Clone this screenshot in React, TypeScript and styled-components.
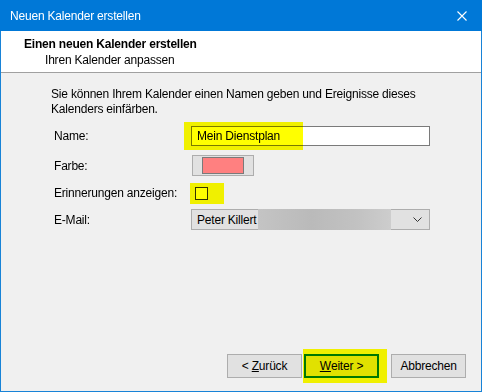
import styled, { createGlobalStyle } from 'styled-components';

const GlobalStyle = createGlobalStyle`
  html, body {
    margin: 0;
    padding: 0;
    background: #f0f0f0;
  }
  body {
    font-family: 'Liberation Sans', 'DejaVu Sans', sans-serif;
    font-size: 12px;
    letter-spacing: -0.2px;
    color: #000;
  }
`;

const Window = styled.div`
  width: 482px;
  height: 392px;
  box-sizing: border-box;
  display: flex;
  flex-direction: column;
  border: 1px solid #1883d7;
  border-top: 0;
  background: #f0f0f0;
`;

const TitleBar = styled.div`
  height: 31px;
  margin: 0 -1px;
  flex-shrink: 0;
  display: flex;
  align-items: center;
  justify-content: space-between;
  padding: 0 10px 0 10px;
  background: #0078d7;
  color: #fff;
  font-size: 12px;
`;

const CloseButton = styled.div`
  width: 10px;
  height: 10px;
  margin-right: 5px;
  display: flex;
`;

const Header = styled.div`
  height: 42px;
  flex-shrink: 0;
  box-sizing: border-box;
  padding: 5px 0 0 23px;
  background: #fff;
  border-bottom: 1px solid #a0a0a0;
  line-height: 16px;
`;

const HeaderTitle = styled.div`
  font-weight: bold;
`;

const HeaderSub = styled.div`
  padding-left: 21px;
`;

const Body = styled.div`
  flex: 1;
  display: flex;
  flex-direction: column;
  padding: 14px 15px 13px 50px;
`;

const Description = styled.p`
  margin: 0 0 9px;
  line-height: 15px;
`;

const Row = styled.div<{ $gap: number }>`
  display: grid;
  grid-template-columns: 137px 1fr;
  align-items: center;
  margin: ${(p) => p.$gap}px 0 0 3px;
`;

const Label = styled.span`
  line-height: 14px;
`;

const Control = styled.div`
  position: relative;
  display: flex;
  align-items: center;
`;

const Marker = styled.span<{ $l: number; $t: number; $w: number; $h: number }>`
  position: absolute;
  left: ${(p) => p.$l}px;
  top: ${(p) => p.$t}px;
  width: ${(p) => p.$w}px;
  height: ${(p) => p.$h}px;
  background: #ffff00;
  mix-blend-mode: multiply;
  pointer-events: none;
`;

const TextInput = styled.input`
  width: 239px;
  height: 20px;
  box-sizing: border-box;
  margin: 0;
  padding: 0 5px;
  border: 1px solid #7a7a7a;
  background: #fff;
  font: inherit;
  letter-spacing: inherit;
  color: #000;
  outline: none;
`;

const ColorButton = styled.div`
  width: 62px;
  height: 21px;
  box-sizing: border-box;
  margin-left: 1px;
  display: flex;
  align-items: center;
  justify-content: center;
  background: #e1e1e1;
  border: 1px solid #adadad;
`;

const Swatch = styled.span<{ $color: string }>`
  width: 42px;
  height: 17px;
  box-sizing: border-box;
  background: ${(p) => p.$color};
  border: 1px solid #7a7a7a;
`;

const Checkbox = styled.span`
  width: 13px;
  height: 13px;
  box-sizing: border-box;
  margin-left: 4px;
  background: #fff;
  border: 1px solid #333;
`;

const Combo = styled.div`
  width: 239px;
  height: 21px;
  box-sizing: border-box;
  display: flex;
  align-items: center;
  padding-left: 5px;
  background: #e1e1e1;
  border: 1px solid #adadad;
`;

const Blurred = styled.span`
  align-self: stretch;
  width: 133px;
  margin: -1px 0 -1px 2px;
  background: linear-gradient(90deg, #c4c4c4 0%, #bababa 40%, #c2c2c2 75%, #cdcdcd 100%);
`;

const Chevron = styled.svg`
  margin-left: auto;
  margin-right: 7px;
`;

const Footer = styled.div`
  margin-top: auto;
  display: flex;
  justify-content: flex-end;
  gap: 2px;
`;

const Button = styled.div<{ $focused?: boolean }>`
  position: relative;
  width: 75px;
  height: 24px;
  box-sizing: border-box;
  display: flex;
  align-items: center;
  justify-content: center;
  background: #e1e1e1;
  border: ${(p) => (p.$focused ? '2px solid #0078d7' : '1px solid #adadad')};
  &:last-child {
    margin-left: 10px;
  }
`;

export default function App() {
  return (
    <>
      <GlobalStyle />
      <Window>
        <TitleBar>
          <span>Neuen Kalender erstellen</span>
          <CloseButton>
            <svg width="10" height="10" viewBox="0 0 10 10">
              <path d="M0.5 0.5 L9.5 9.5 M9.5 0.5 L0.5 9.5" stroke="#fff" strokeWidth="1.1" />
            </svg>
          </CloseButton>
        </TitleBar>
        <Header>
          <HeaderTitle>Einen neuen Kalender erstellen</HeaderTitle>
          <HeaderSub>Ihren Kalender anpassen</HeaderSub>
        </Header>
        <Body>
          <Description>
            Sie können Ihrem Kalender einen Namen geben und Ereignisse dieses
            <br />
            Kalenders einfärben.
          </Description>
          <Row $gap={0}>
            <Label>Name:</Label>
            <Control>
              <TextInput defaultValue="Mein Dienstplan" readOnly />
              <Marker $l={-7} $t={-4} $w={119} $h={28} />
            </Control>
          </Row>
          <Row $gap={9}>
            <Label>Farbe:</Label>
            <Control>
              <ColorButton>
                <Swatch $color="#ff8080" />
              </ColorButton>
            </Control>
          </Row>
          <Row $gap={10}>
            <Label>Erinnerungen anzeigen:</Label>
            <Control>
              <Checkbox />
              <Marker $l={-1} $t={-4} $w={34} $h={21} />
            </Control>
          </Row>
          <Row $gap={9}>
            <Label>E-Mail:</Label>
            <Control>
              <Combo>
                <span>Peter Killert</span>
                <Blurred />
                <Chevron width="9" height="5" viewBox="0 0 9 5">
                  <path d="M0.5 0.5 L4.5 4.5 L8.5 0.5" fill="none" stroke="#333" strokeWidth="1" />
                </Chevron>
              </Combo>
            </Control>
          </Row>
          <Footer>
            <Button>
              &lt;&nbsp;<u>Z</u>urück
            </Button>
            <Button $focused>
              <u>W</u>eiter &gt;
              <Marker $l={-3} $t={-7} $w={84} $h={34} />
            </Button>
            <Button>Abbrechen</Button>
          </Footer>
        </Body>
      </Window>
    </>
  );
}
